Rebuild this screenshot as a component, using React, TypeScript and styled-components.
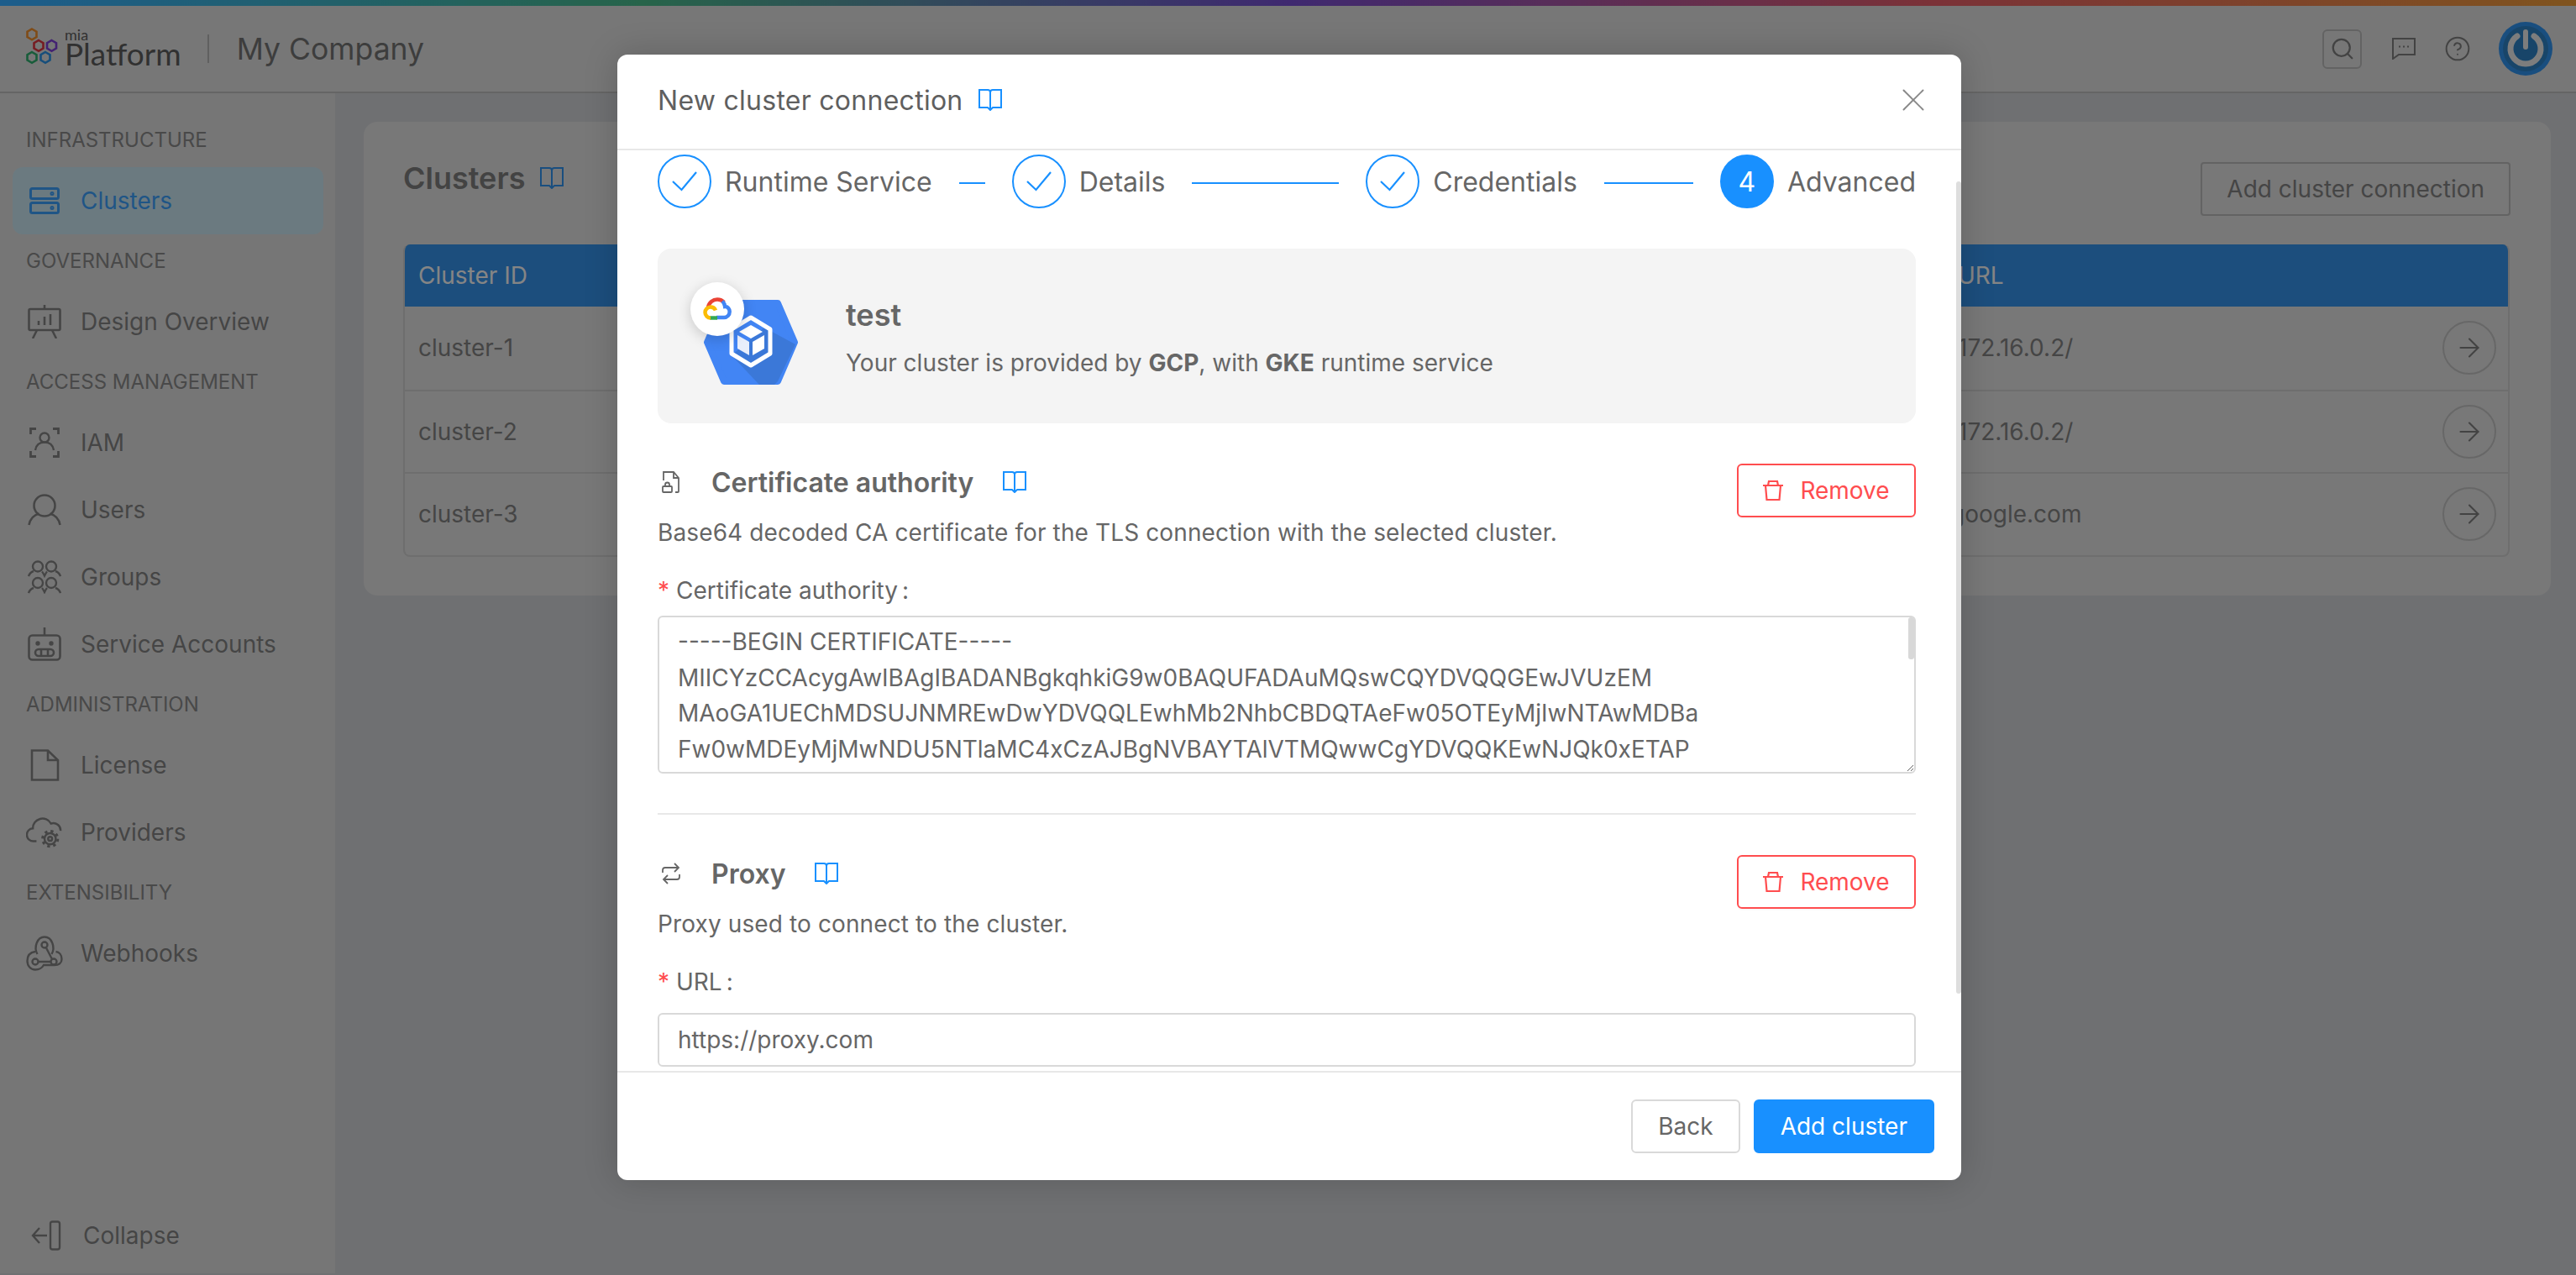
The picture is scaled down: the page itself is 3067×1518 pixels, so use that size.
import React from 'react';
import styled, { createGlobalStyle } from 'styled-components';
import { ArrowRight, CircleHelp, Search, X } from 'lucide-react';

const GlobalStyle = createGlobalStyle`
  html, body {
    margin: 0;
    padding: 0;
    font-family: Inter, "Noto Sans", sans-serif;
    color: #7f7f7f;
  }
  * {
    box-sizing: border-box;
  }
`;

const BookIcon = () => (
  <svg width="28" height="26" viewBox="0 0 28 26" fill="none" stroke="#1890ff" strokeWidth="2">
    <path d="M14 4C14 2 13 1 11 1H1v21h10l3 3 3-3h10V1H17c-2 0-3 1-3 3v20" />
  </svg>
);

const CheckIcon = () => (
  <svg width="30" height="24" viewBox="0 0 30 24" fill="none" stroke="#1890ff" strokeWidth="2.2">
    <path d="M1 12l10.500 10L29 1" />
  </svg>
);

const TrashIcon = () => (
  <svg width="24" height="24" viewBox="0 0 24 24" fill="none" stroke="#ff4d4f" strokeWidth="2.2">
    <path d="M0 6h24M3 6l1.500 17h15L21 6M6 6l1-5h10l1 5" />
  </svg>
);

const FileLockIcon = () => (
  <svg width="22" height="26" viewBox="0 0 22 26" fill="none" stroke="#666" strokeWidth="1.8">
    <path d="M2 11V1h12l6 7v16a1 1 0 0 1-1 1h-3M14 1v7h6" />
    <rect x="1" y="18" width="11" height="7" rx="1" />
    <path d="M4 18v-2a2.500 2.500 0 0 1 5 0v2" />
  </svg>
);

const SwapIcon = () => (
  <svg width="22" height="26" viewBox="0 0 22 26" fill="none" stroke="#666" strokeWidth="1.8">
    <path d="M1 12V9a3 3 0 0 1 3-3h16M15 1l5 5-5 5M21 14v3a3 3 0 0 1-3 3H2M7 15l-5 5 5 5" />
  </svg>
);

const ClustersIcon = () => (
  <svg width="36" height="32" viewBox="0 0 36 32" fill="none" stroke="currentColor" strokeWidth="3">
    <rect x="1.500" y="1.500" width="33" height="12" rx="2" />
    <rect x="1.500" y="18.500" width="33" height="12" rx="2" />
    <circle cx="27" cy="7.500" r="1" />
    <circle cx="27" cy="24.500" r="1" />
  </svg>
);

const DesignIcon = () => (
  <svg width="40" height="40" viewBox="0 0 40 40" fill="none" stroke="currentColor" strokeWidth="2.600">
    <rect x="1.500" y="5" width="37" height="25" rx="1.500" />
    <path d="M20 0v5M11 30l-5 10M29 30l5 10M13 24v-5M20 24V14M27 24V11" />
  </svg>
);

const IamIcon = () => (
  <svg width="36" height="36" viewBox="0 0 36 36" fill="none" stroke="currentColor" strokeWidth="2.400">
    <path d="M1.500 8V1.500H8M28 1.500h6.500V8M1.500 28v6.500H8M28 34.500h6.500V28" strokeWidth="2.800" />
    <circle cx="18" cy="12" r="5.500" />
    <path d="M7 27c1-6 5-9.500 11-9.500S28 21 29 27" />
  </svg>
);

const UsersIcon = () => (
  <svg width="40" height="38" viewBox="0 0 40 38" fill="none" stroke="currentColor" strokeWidth="2.600">
    <circle cx="20" cy="14" r="12.500" />
    <path d="M1.500 37c1.500-8 6.500-12 12-13.500M38.500 37c-1.500-8-6.500-12-12-13.500" />
  </svg>
);

const GroupsIcon = () => (
  <svg width="40" height="40" viewBox="0 0 40 40" fill="none" stroke="currentColor" strokeWidth="2.400">
    <circle cx="12" cy="7.500" r="6" />
    <circle cx="28" cy="7.500" r="6" />
    <circle cx="12" cy="27" r="6" />
    <circle cx="28" cy="27" r="6" />
    <path d="M1 19c1-3 3-5 6-6M39 19c-1-3-3-5-6-6M17 13.500c1 1 2 3 3 5 1-2 2-4 3-5" />
    <path d="M1 39c1-3 3-5 6-6M39 39c-1-3-3-5-6-6M17 33c1 1 2 3 3 5 1-2 2-4 3-5" />
  </svg>
);

const RobotIcon = () => (
  <svg width="40" height="40" viewBox="0 0 40 40" fill="none" stroke="currentColor" strokeWidth="2.600">
    <rect x="1.500" y="9.500" width="37" height="29" rx="4" />
    <path d="M20 0v9.500" />
    <rect x="9" y="26" width="22" height="8" rx="4" />
    <path d="M16 26v8M24 26v8" />
    <circle cx="12" cy="19" r="1.400" fill="currentColor" />
    <circle cx="28" cy="19" r="1.400" fill="currentColor" />
  </svg>
);

const LicenseIcon = () => (
  <svg width="36" height="38" viewBox="0 0 36 38" fill="none" stroke="currentColor" strokeWidth="2.600">
    <path d="M3 1.500h19L34 13v23.500H3zM22 1.500V13h12" />
  </svg>
);

const ProvidersIcon = () => (
  <svg width="46" height="40" viewBox="0 0 46 40" fill="none" stroke="currentColor" strokeWidth="2.600">
    <path d="M13 31H9.500a8 8 0 0 1-1-16A12 12 0 0 1 31 9a9 9 0 0 1 12 9" />
    <circle cx="30" cy="28" r="7" />
    <circle cx="30" cy="28" r="2.500" />
    <circle cx="30" cy="28" r="9.500" strokeWidth="3.200" strokeDasharray="3.500 4" />
  </svg>
);

const WebhookIcon = () => (
  <svg width="44" height="42" viewBox="0 0 44 42" fill="none" stroke="currentColor" strokeWidth="2.400">
    <path d="M13.500 22C9 14 13 1.500 22 1.500S35 14 30.500 22M11 19C4 20 1.500 25 1.500 30c0 6 4 10.500 9.500 10.500 4 0 8-2 10-5.500h13c5 0 8.500-2.500 8.500-7 0-5-3-8.500-7-9" />
    <circle cx="22" cy="11" r="3.500" />
    <circle cx="11" cy="31" r="3.500" />
    <circle cx="33" cy="31" r="3.500" />
    <path d="M24 14.500L31 28M14.500 31h15" />
  </svg>
);

const CollapseIcon = () => (
  <svg width="36" height="36" viewBox="0 0 36 36" fill="none" stroke="currentColor" strokeWidth="2.400">
    <rect x="23" y="1.500" width="11" height="33" rx="2.500" />
    <path d="M19 18H2M10 9l-8 9 8 9" />
  </svg>
);

const ChatIcon = () => (
  <svg width="28" height="26" viewBox="0 0 28 26" fill="none" stroke="currentColor" strokeWidth="2">
    <path d="M1 1h26v19H8l-7 5z" />
    <path d="M8 10.500h2M13 10.500h2M18 10.500h2" strokeWidth="2.200" />
  </svg>
);

const PowerAvatar = () => (
  <svg width="64" height="64" viewBox="0 0 64 64" fill="none">
    <circle cx="32" cy="32" r="32" fill="#2f8fe8" />
    <circle cx="32" cy="32" r="27" fill="#2c7fc0" />
    <path d="M22 17a18 18 0 1 0 20 0" stroke="#e4e4e4" strokeWidth="7" strokeLinecap="round" />
    <path d="M32 12v18" stroke="#e4e4e4" strokeWidth="6" strokeLinecap="round" />
  </svg>
);

const MiaHexes = () => (
  <svg width="38" height="44" viewBox="0 0 38 44" fill="none" strokeWidth="2.600">
    <path d="M7 1.500l5.500 3.200v6.400L7 14.300l-5.500-3.200V4.700z" stroke="#e88a2c" />
    <path d="M15 15l5.500 3.200v6.400L15 27.800l-5.500-3.200v-6.400z" stroke="#d8333f" />
    <path d="M30.500 15l5.500 3.200v6.400l-5.500 3.200-5.500-3.200v-6.400z" stroke="#7a3fd0" />
    <path d="M7 29l5.500 3.200v6.400L7 41.800l-5.500-3.200v-6.400z" stroke="#2ca86a" />
    <path d="M23 29l5.500 3.200v6.400L23 41.800l-5.500-3.200v-6.400z" stroke="#2b8fe0" />
  </svg>
);

const KubeHex = () => (
  <svg width="112" height="101" viewBox="0 0 112 101" fill="none">
    <path d="M24 4h64l20 46.500L88 97H24L4 50.500z" fill="#4285f4" stroke="#4285f4" strokeWidth="8" strokeLinejoin="round" />
    <path d="M72 33l37 20-21 44-4 4H66L33 66z" fill="#3b78d8" />
    <path d="M56 21l23 14v29L56 78 33 64V35z" fill="none" stroke="#fff" strokeWidth="5" strokeLinejoin="round" />
    <path d="M56 30l14 8-14 8-14-8z" fill="#fff" />
    <path d="M40 42l14 8v16l-14-8z" fill="#e8eefb" />
    <path d="M72 42l-14 8v16l14-8z" fill="#fff" />
  </svg>
);

const GoogleCloudIcon = () => (
  <svg width="34" height="28" viewBox="0 0 34 28" fill="none" strokeWidth="4.500">
    <path d="M6 12C7 6 12 2.500 17 2.500c3 0 6 1 8 3.500" stroke="#ea4335" />
    <path d="M23 4.500c2 2 3 4 3.200 6.500 3-.2 5.500 2.800 5.500 6 0 4-3 7-6.500 7H16" stroke="#4285f4" />
    <path d="M17 24.500H8" stroke="#34a853" />
    <path d="M9 24.500c-3.500 0-6.500-3-6.500-6.500s3-6.500 6.500-6.500c3 0 5 1.500 6 4" stroke="#fbbc05" />
  </svg>
);

const Page = styled.div`
  position: relative;
  width: 3067px;
  height: 1518px;
  overflow: hidden;
  background: #caccd0;
`;

const TopStrip = styled.div`
  height: 7px;
  background: linear-gradient(90deg, #35a9ff 0%, #47b687 25%, #734ccc 50%, #e05b66 75%, #e99938 100%);
`;

const Header = styled.header`
  display: flex;
  align-items: center;
  height: 104px;
  padding: 0 28px 0 31px;
  background: #d9d9d9;
  border-bottom: 2px solid #b8b8b8;
`;

const Logo = styled.div`
  display: flex;
  align-items: flex-start;
  gap: 8px;
  margin-bottom: 4px;
`;

const LogoText = styled.div`
  display: flex;
  flex-direction: column;
  margin-top: 1px;
  font-family: Lato, sans-serif;
  font-size: 37px;
  line-height: 32px;
  color: #5a5a5a;

  span {
    font-size: 18px;
    line-height: 14px;
  }
`;

const HeaderDivider = styled.div`
  width: 2px;
  height: 34px;
  margin: 0 33px 0 31px;
  background: #b0b0b0;
`;

const CompanyName = styled.div`
  font-size: 35.600px;
  color: #707070;
`;

const HeaderActions = styled.div`
  display: flex;
  align-items: center;
  margin-left: auto;
  color: #7a7a7a;
`;

const SearchBox = styled.div`
  display: flex;
  align-items: center;
  justify-content: center;
  width: 47px;
  height: 47px;
  margin-right: 36px;
  border: 2px solid #b4b4b4;
  border-radius: 6px;
`;

const HelpSlot = styled.div`
  display: flex;
  margin: 0 33px 0 34px;
`;

const Main = styled.div`
  display: flex;
  height: 1405px;
`;

const Sidebar = styled.nav`
  display: flex;
  flex-direction: column;
  flex: none;
  width: 399px;
  padding: 24px 14px 0 15px;
  background: #d8d8d8;
`;

const SectionLabel = styled.div`
  height: 64px;
  padding-left: 16px;
  font-size: 24px;
  line-height: 64px;
  color: #858585;
`;

const NavItem = styled.div<{ $active?: boolean }>`
  display: flex;
  align-items: center;
  height: 80px;
  border-radius: 12px;
  font-size: 28px;
  color: ${(p) => (p.$active ? '#3a9bf5' : '#7f7f7f')};
  background: ${(p) => (p.$active ? '#c4dee9' : 'transparent')};
`;

const NavIcon = styled.span`
  display: flex;
  align-items: center;
  justify-content: center;
  flex: none;
  width: 44px;
  margin: 0 21px 0 16px;
`;

const CollapseRow = styled.div`
  display: flex;
  align-items: center;
  gap: 26px;
  height: 40px;
  margin-top: auto;
  margin-bottom: 25px;
  padding-left: 22px;
  font-size: 28px;
  color: #7f7f7f;
`;

const Content = styled.main`
  flex: 1;
  padding: 34px 30px 0 34px;
`;

const Card = styled.section`
  height: 564px;
  padding: 48px 49px 0 47px;
  border-radius: 16px;
  background: #dadada;
`;

const CardHead = styled.div`
  display: flex;
  align-items: center;
  justify-content: space-between;
  height: 64px;
  margin-bottom: 34px;
`;

const CardTitle = styled.h2`
  display: flex;
  align-items: center;
  gap: 18px;
  margin: -26px 0 0;
  font-size: 36px;
  font-weight: 600;
  color: #7a7a7a;

  svg {
    stroke: #2f8fe8;
  }
`;

const GhostButton = styled.div`
  height: 64px;
  margin-right: -1px;
  padding: 0 29px;
  border: 2px solid #b4b4b4;
  border-radius: 4px;
  font-size: 28px;
  line-height: 60px;
  color: #7f7f7f;
`;

const Table = styled.div`
  border: 2px solid #c8c8c8;
  border-top: 0;
  border-radius: 8px;
  overflow: hidden;
`;

const TableRow = styled.div<{ $head?: boolean }>`
  display: grid;
  grid-template-columns: 1fr 655px;
  align-items: center;
  height: ${(p) => (p.$head ? '74px' : '98.500px')};
  padding-left: 16px;
  font-size: 28px;
  color: ${(p) => (p.$head ? '#f2f2f2' : '#7f7f7f')};
  background: ${(p) => (p.$head ? '#338ee3' : 'transparent')};

  &:nth-child(n + 3) {
    border-top: 2px solid #c8c8c8;
  }
`;

const UrlCell = styled.div`
  display: flex;
  align-items: center;
  justify-content: space-between;
  padding-right: 14px;
`;

const UrlText = styled.span<{ $nudge?: boolean }>`
  margin-left: ${(p) => (p.$nudge ? '-9px' : '0')};
`;

const ArrowCircle = styled.div`
  display: flex;
  align-items: center;
  justify-content: center;
  width: 64px;
  height: 64px;
  border: 2px solid #bcbcbc;
  border-radius: 50%;
  color: #7a7a7a;
`;

const Mask = styled.div`
  position: absolute;
  inset: 0;
  display: flex;
  align-items: flex-start;
  padding: 65px 0 0 735px;
  background: rgba(0, 0, 0, 0.45);
`;

const Modal = styled.div`
  position: relative;
  display: flex;
  flex-direction: column;
  width: 1600px;
  height: 1340px;
  border-radius: 12px;
  background: #fff;
  box-shadow: 0 0 40px rgba(0, 0, 0, 0.18);
  color: #666;
`;

const ModalHeader = styled.div`
  display: flex;
  align-items: center;
  flex: none;
  height: 114px;
  padding: 0 34px 4px 48px;
  border-bottom: 2px solid #e8e8e8;
`;

const ModalTitle = styled.div`
  display: flex;
  align-items: center;
  gap: 18px;
  font-size: 32px;
  letter-spacing: 0.27px;
  color: #5f5f5f;
`;

const CloseBtn = styled.div`
  display: flex;
  margin-left: auto;
  color: #888;
`;

const ModalBody = styled.div`
  flex: 1;
  min-height: 0;
  padding: 5px 54px 0 48px;
  overflow: hidden;
`;

const ScrollThumb = styled.div`
  position: absolute;
  top: 151px;
  right: 0;
  width: 6px;
  height: 967px;
  border-radius: 3px;
  background: #dedede;
`;

const Steps = styled.div`
  display: flex;
`;

const Step = styled.div<{ $last?: boolean }>`
  display: flex;
  align-items: center;
  flex: ${(p) => (p.$last ? 'none' : '1')};
  font-size: 32px;
  color: #666;
`;

const StepCircle = styled.div<{ $current?: boolean }>`
  display: flex;
  align-items: center;
  justify-content: center;
  flex: none;
  width: 64px;
  height: 64px;
  margin-right: 16px;
  border: 2px solid #1890ff;
  border-radius: 50%;
  color: #fff;
  background: ${(p) => (p.$current ? '#1890ff' : '#fff')};
  font-size: 32px;
`;

const StepLine = styled.div`
  flex: 1;
  height: 2px;
  margin: 4px 32px 0;
  background: #1890ff;
`;

const ProviderCard = styled.div`
  display: flex;
  height: 208px;
  margin-top: 48px;
  padding: 40px 0 0 39px;
  border-radius: 16px;
  background: #f4f4f4;
`;

const ProviderArt = styled.div`
  position: relative;
  flex: none;
  width: 128px;
  height: 122px;
  padding: 21px 0 0 16px;
`;

const ProviderBadge = styled.div`
  position: absolute;
  top: 0;
  left: 0;
  display: flex;
  align-items: center;
  justify-content: center;
  width: 64px;
  height: 64px;
  border-radius: 50%;
  background: #fff;
  box-shadow: 0 4px 16px rgba(0, 0, 0, 0.18);
`;

const ProviderText = styled.div`
  margin: 15px 0 0 57px;
`;

const ProviderName = styled.div`
  margin-bottom: 11px;
  font-size: 36px;
  font-weight: 600;
  line-height: 48px;
`;

const BodyLine = styled.div`
  font-size: 28px;
  line-height: 44px;
  color: #666;

  b {
    font-weight: 700;
  }
`;

const SectionDesc = styled(BodyLine)`
  letter-spacing: 0.12px;
`;

const FormSection = styled.section`
  margin-top: 48px;
`;

const SectionHead = styled.div`
  display: flex;
  align-items: flex-start;
  justify-content: space-between;
  height: 104px;
`;

const SectionTitleRow = styled.div`
  display: flex;
  align-items: center;
  height: 44px;
  margin-bottom: 16px;
  padding-left: 5px;
`;

const SectionIcon = styled.span`
  display: flex;
  width: 59px;
`;

const SectionTitle = styled.div`
  margin-right: 35px;
  font-size: 32px;
  font-weight: 600;
  color: #666;
`;

const RemoveButton = styled.div`
  display: flex;
  align-items: center;
  justify-content: center;
  gap: 20px;
  width: 213px;
  height: 64px;
  border: 2px solid #ff4d4f;
  border-radius: 6px;
  font-size: 28px;
  color: #ff4d4f;
  box-shadow: 0 2px 0 rgba(0, 0, 0, 0.02);
`;

const FieldLabel = styled.div`
  display: flex;
  height: 44px;
  margin-top: 25px;
  font-size: 28px;
  line-height: 44px;
  color: #666;

  i {
    width: 22px;
    color: #ff4d4f;
    font-style: normal;
  }

  span {
    margin-left: 5px;
  }
`;

const CertField = styled.div`
  position: relative;
  margin-top: 8px;
`;

const CertArea = styled.textarea`
  display: block;
  width: 100%;
  height: 188px;
  padding: 8px 10px 0 22px;
  border: 2px solid #d9d9d9;
  border-radius: 6px;
  outline: none;
  resize: vertical;
  overflow: hidden;
  white-space: pre;
  font-family: Inter, sans-serif;
  font-size: 28px;
  line-height: 42.500px;
  color: #666;
`;

const CertThumb = styled.div`
  position: absolute;
  top: 2px;
  right: 2px;
  width: 7px;
  height: 50px;
  border-radius: 3px;
  background: #d8d8d8;
`;

const Divider = styled.hr`
  height: 2px;
  margin: 47px 0 1px;
  border: 0;
  background: #e8e8e8;
`;

const UrlInput = styled.div`
  height: 64px;
  margin-top: 15px;
  padding-left: 22px;
  border: 2px solid #d9d9d9;
  border-radius: 6px;
  font-size: 28px;
  line-height: 60px;
  color: #666;
`;

const ModalFooter = styled.div`
  display: flex;
  flex: none;
  justify-content: flex-end;
  gap: 16px;
  height: 130px;
  padding: 32px;
  border-top: 2px solid #e8e8e8;
`;

const FooterButton = styled.div<{ $primary?: boolean }>`
  height: 64px;
  padding: 0 30px;
  border: 2px solid ${(p) => (p.$primary ? '#1890ff' : '#d9d9d9')};
  border-radius: 6px;
  font-size: 28px;
  line-height: 60px;
  color: ${(p) => (p.$primary ? '#fff' : '#666')};
  background: ${(p) => (p.$primary ? '#1890ff' : '#fff')};
`;

const navGroups = [
  { label: 'INFRASTRUCTURE', items: [{ name: 'Clusters', icon: <ClustersIcon />, active: true }] },
  { label: 'GOVERNANCE', items: [{ name: 'Design Overview', icon: <DesignIcon /> }] },
  {
    label: 'ACCESS MANAGEMENT',
    items: [
      { name: 'IAM', icon: <IamIcon /> },
      { name: 'Users', icon: <UsersIcon /> },
      { name: 'Groups', icon: <GroupsIcon /> },
      { name: 'Service Accounts', icon: <RobotIcon /> },
    ],
  },
  {
    label: 'ADMINISTRATION',
    items: [
      { name: 'License', icon: <LicenseIcon /> },
      { name: 'Providers', icon: <ProvidersIcon /> },
    ],
  },
  { label: 'EXTENSIBILITY', items: [{ name: 'Webhooks', icon: <WebhookIcon /> }] },
];

const clusters = [
  { id: 'cluster-1', url: '172.16.0.2/' },
  { id: 'cluster-2', url: '172.16.0.2/' },
  { id: 'cluster-3', url: 'google.com', nudge: true },
];

const certificate = `-----BEGIN CERTIFICATE-----
MIICYzCCAcygAwIBAgIBADANBgkqhkiG9w0BAQUFADAuMQswCQYDVQQGEwJVUzEM
MAoGA1UEChMDSUJNMREwDwYDVQQLEwhMb2NhbCBDQTAeFw05OTEyMjIwNTAwMDBa
Fw0wMDEyMjMwNDU5NTlaMC4xCzAJBgNVBAYTAlVTMQwwCgYDVQQKEwNJQk0xETAP`;

const steps = ['Runtime Service', 'Details', 'Credentials'];

const App: React.FC = () => {
  return (
    <Page>
      <GlobalStyle />
      <TopStrip />
      <Header>
        <Logo>
          <MiaHexes />
          <LogoText>
            <span>mia</span>
            Platform
          </LogoText>
        </Logo>
        <HeaderDivider />
        <CompanyName>My Company</CompanyName>
        <HeaderActions>
          <SearchBox>
            <Search size={30} strokeWidth={1.8} />
          </SearchBox>
          <ChatIcon />
          <HelpSlot>
            <CircleHelp size={32} strokeWidth={1.5} />
          </HelpSlot>
          <PowerAvatar />
        </HeaderActions>
      </Header>
      <Main>
        <Sidebar>
          {navGroups.map((group) => (
            <React.Fragment key={group.label}>
              <SectionLabel>{group.label}</SectionLabel>
              {group.items.map((item) => (
                <NavItem key={item.name} $active={'active' in item}>
                  <NavIcon>{item.icon}</NavIcon>
                  {item.name}
                </NavItem>
              ))}
            </React.Fragment>
          ))}
          <CollapseRow>
            <CollapseIcon />
            Collapse
          </CollapseRow>
        </Sidebar>
        <Content>
          <Card>
            <CardHead>
              <CardTitle>
                Clusters
                <BookIcon />
              </CardTitle>
              <GhostButton>Add cluster connection</GhostButton>
            </CardHead>
            <Table>
              <TableRow $head>
                <div>Cluster ID</div>
                <div>URL</div>
              </TableRow>
              {clusters.map((row) => (
                <TableRow key={row.id}>
                  <div>{row.id}</div>
                  <UrlCell>
                    <UrlText $nudge={row.nudge}>{row.url}</UrlText>
                    <ArrowCircle>
                      <ArrowRight size={36} strokeWidth={1.4} />
                    </ArrowCircle>
                  </UrlCell>
                </TableRow>
              ))}
            </Table>
          </Card>
        </Content>
      </Main>
      <Mask>
        <Modal>
          <ModalHeader>
            <ModalTitle>
              New cluster connection
              <BookIcon />
            </ModalTitle>
            <CloseBtn>
              <X size={46} strokeWidth={1} />
            </CloseBtn>
          </ModalHeader>
          <ModalBody>
            <Steps>
              {steps.map((name) => (
                <Step key={name}>
                  <StepCircle>
                    <CheckIcon />
                  </StepCircle>
                  {name}
                  <StepLine />
                </Step>
              ))}
              <Step $last>
                <StepCircle $current>4</StepCircle>
                Advanced
              </Step>
            </Steps>
            <ProviderCard>
              <ProviderArt>
                <KubeHex />
                <ProviderBadge>
                  <GoogleCloudIcon />
                </ProviderBadge>
              </ProviderArt>
              <ProviderText>
                <ProviderName>test</ProviderName>
                <BodyLine>
                  Your cluster is provided by <b>GCP</b>, with <b>GKE</b> runtime service
                </BodyLine>
              </ProviderText>
            </ProviderCard>
            <FormSection>
              <SectionHead>
                <div>
                  <SectionTitleRow>
                    <SectionIcon>
                      <FileLockIcon />
                    </SectionIcon>
                    <SectionTitle>Certificate authority</SectionTitle>
                    <BookIcon />
                  </SectionTitleRow>
                  <SectionDesc>Base64 decoded CA certificate for the TLS connection with the selected cluster.</SectionDesc>
                </div>
                <RemoveButton>
                  <TrashIcon />
                  Remove
                </RemoveButton>
              </SectionHead>
              <FieldLabel>
                <i>*</i>
                Certificate authority<span>:</span>
              </FieldLabel>
              <CertField>
                <CertArea readOnly defaultValue={certificate} />
                <CertThumb />
              </CertField>
            </FormSection>
            <Divider />
            <FormSection>
              <SectionHead>
                <div>
                  <SectionTitleRow>
                    <SectionIcon>
                      <SwapIcon />
                    </SectionIcon>
                    <SectionTitle>Proxy</SectionTitle>
                    <BookIcon />
                  </SectionTitleRow>
                  <SectionDesc>Proxy used to connect to the cluster.</SectionDesc>
                </div>
                <RemoveButton>
                  <TrashIcon />
                  Remove
                </RemoveButton>
              </SectionHead>
              <FieldLabel>
                <i>*</i>
                URL<span>:</span>
              </FieldLabel>
              <UrlInput>https://proxy.com</UrlInput>
            </FormSection>
          </ModalBody>
          <ScrollThumb />
          <ModalFooter>
            <FooterButton>Back</FooterButton>
            <FooterButton $primary>Add cluster</FooterButton>
          </ModalFooter>
        </Modal>
      </Mask>
    </Page>
  );
};

export default App;
